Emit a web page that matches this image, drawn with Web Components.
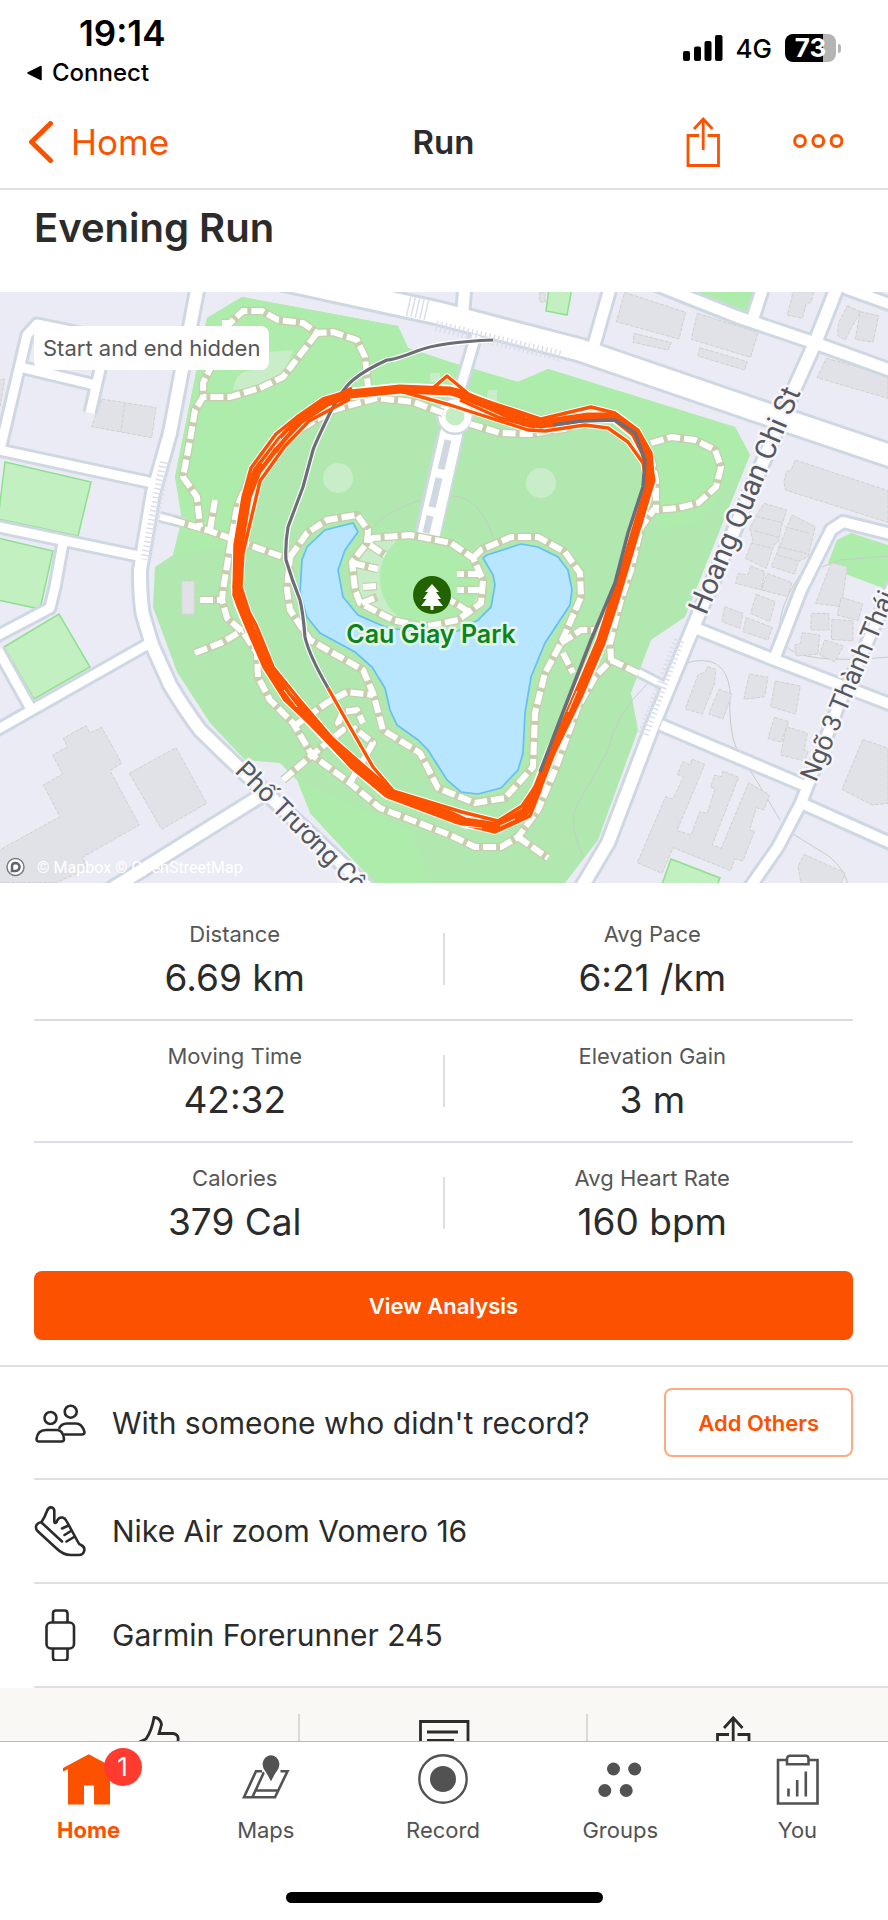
<!DOCTYPE html>
<html lang="en">
<head>
<meta charset="utf-8">
<meta name="viewport" content="width=device-width, initial-scale=1">
<title>Evening Run</title>
<style>
    :root {
        --orange: #fc5200;
        --ink: #2b2b2b;
        --muted: #565656;
        --line: #e0e0e0;
    }
    body {
        margin: 0;
        height: 100vh;
        display: flex;
        flex-direction: column;
        background: #fff;
        color: var(--ink);
        font-family: Inter, "Liberation Sans", sans-serif;
    }
    main {
        flex: 1;
        min-height: 0;
        overflow-y: auto;
        scrollbar-width: none;
    }
</style>
</head>
<body>
    <status-bar time="19:14" app="Connect" network="4G" battery="73"></status-bar>
    <nav-bar back="Home">Run</nav-bar>
    <main>
        <activity-title>Evening Run</activity-title>
        <route-map>Start and end hidden</route-map>
        <stat-list>
            <stat-row>
                <stat-item label="Distance">6.69 km</stat-item>
                <stat-item label="Avg Pace">6:21 /km</stat-item>
            </stat-row>
            <stat-row>
                <stat-item label="Moving Time">42:32</stat-item>
                <stat-item label="Elevation Gain">3 m</stat-item>
            </stat-row>
            <stat-row last>
                <stat-item label="Calories">379 Cal</stat-item>
                <stat-item label="Avg Heart Rate">160 bpm</stat-item>
            </stat-row>
            <app-button slot="action">View Analysis</app-button>
        </stat-list>
        <detail-row icon="people" tall>With someone who didn't record?
            <app-button slot="action" outline>Add Others</app-button>
        </detail-row>
        <detail-row icon="shoe">Nike Air zoom Vomero 16</detail-row>
        <detail-row icon="watch">Garmin Forerunner 245</detail-row>
        <social-bar></social-bar>
    </main>
    <tab-bar>
        <tab-item icon="home" badge="1" active>Home</tab-item>
        <tab-item icon="maps">Maps</tab-item>
        <tab-item icon="record">Record</tab-item>
        <tab-item icon="groups">Groups</tab-item>
        <tab-item icon="you">You</tab-item>
    </tab-bar>

<script>
    // All icons share a 52x52 box
    const icons = {
        people: `<g fill="none" stroke="currentColor" stroke-width="2.6" stroke-linejoin="round">
            <circle cx="16.5" cy="21" r="6"/><circle cx="36.7" cy="14.7" r="6"/>
            <path d="M12 33h11q6 0 7 9q0 2.500-2.500 2.500H5q-2.500 0-2.500-2.500Q3.500 33 12 33z"/>
            <path d="M25 32q2-5.500 8-5.500h9q6 0 8.500 8.500q0 2.500-2.500 2.500H30"/></g>`,
        shoe: `<g fill="none" stroke="currentColor" stroke-width="2.6" stroke-linejoin="round" stroke-linecap="round">
            <path d="M7.500 17Q11 12 13 6q1.500-4.500 5-3.500q2.700 1 2.300 5v9q.3 2.500 2.200.8Q24 12 28.500 12.500q2.500.5 4 3.500L44 37q1 2.500 3 3q4.500 2 3 6.500q-1 3.500-5 3.500h-8Q29 50 22 43L3.500 26Q1 23 2.500 20Q4 17.500 7.500 17z"/>
            <path d="M7.500 17.500L28 36.500M28 23.500l6.500-3M30.500 30l6.500-4M32.500 36.500L40 32"/></g>`,
        watch: `<g fill="none" stroke="currentColor" stroke-width="2.6">
            <rect x="12.500" y="13.500" width="27.500" height="26" rx="4.500"/>
            <path d="M19 13.500V4.500q0-3 3-3h8.500q3 0 3 3v9M19 39.500v9q0 3 3 3h8.500q3 0 3-3v-9"/></g>`,
        home: `<path fill="currentColor" d="M25.700.3L51.500 14v3.500L47 15.500v35H31V31.500H21v19H5V15.200L0 17.500V14z"/>`,
        maps: `<g fill="none" stroke="currentColor" stroke-width="2.600">
            <path d="M22 17.200h-6L4 43.200h31L47.500 17.200h-7M24 18L12.500 43M16.500 36.500H38"/>
            <path fill="currentColor" stroke="#fff" stroke-width="1.500" d="M31 29.500Q28 22 23.500 16Q19.500 8 25 3q6-5 12 0q5.500 5 1.500 13Q34 22 31 29.500z"/></g>`,
        record: `<circle cx="26" cy="25" r="23.700" fill="none" stroke="currentColor" stroke-width="2.400"/><circle cx="26" cy="25" r="13" fill="currentColor"/>`,
        groups: `<g fill="currentColor"><circle cx="19.500" cy="15" r="6.500"/><circle cx="40.700" cy="15" r="6.500"/><circle cx="10.800" cy="36.500" r="6.500"/><circle cx="32.200" cy="36.500" r="6.500"/></g>`,
        you: `<g fill="none" stroke="currentColor" stroke-width="2.600">
            <path d="M15 6H7v43.500h39.500V6H38M17.500 42.500v-8M26.200 42.500V26M34.800 42.500V17.500"/>
            <path d="M16 10.200V5q0-3.200 3-3.200h16q2.500 0 2.500 3.200v5.200z"/></g>`,
        kudos: `<path fill="none" stroke="currentColor" stroke-width="2.800" d="M4 31l13-6q6-9 8-21.500q6 0 7.500 7l-2.500 9H44q6 1 5 7l-4 21H20L4 48z"/>`,
        comment: `<g fill="none" stroke="currentColor" stroke-width="2.800"><path d="M2.500 7.500h47.500v34H26l-10 9v-9H2.500z"/><path d="M9 18h31M9 26.500h27M9 35h22"/></g>`,
        share: `<g fill="none" stroke="currentColor" stroke-width="2.800"><path d="M22 20.500H10.500V51h31.500V20.500H30.500M26.200 3.500V36M17 14l9.200-10.200L35.500 14"/></g>`
    };

    const icon = name => `<svg viewBox="0 0 52 52" width="52" height="52" aria-hidden="true">${icons[name]}</svg>`;

    const define = (name, render) => customElements.define(name, class extends HTMLElement {
        connectedCallback() {
            if (this.shadowRoot) return;
            this.attachShadow({ mode: 'open' });
            this.shadowRoot.innerHTML = render(this);
        }
    });

    define('status-bar', el => `
        <style>
            :host {
                display: flex;
                justify-content: space-between;
                height: 96px;
                padding: 0 47px 0 27px;
                color: #000;
            }
            .left { display: flex; flex-direction: column; padding-top: 13px; }
            .time { padding-left: 52px; font-size: 35px; font-weight: 600; line-height: 40px; }
            a {
                display: flex;
                align-items: center;
                gap: 9px;
                font-size: 24px;
                font-weight: 500;
                line-height: 40px;
                color: inherit;
                text-decoration: none;
            }
            .right { display: flex; align-items: center; gap: 13px; font-size: 26px; font-weight: 500; }
            .battery { display: flex; align-items: center; gap: 2px; }
            .level {
                width: 51px;
                border-radius: 8px;
                background: linear-gradient(90deg, #000 75%, #b4b4b4 75%);
                color: #fff;
                font-weight: 700;
                line-height: 28px;
                text-align: center;
            }
            .nub { width: 3px; height: 9px; border-radius: 0 4px 4px 0; background: #b4b4b4; }
        </style>
        <div class="left">
            <span class="time">${el.getAttribute('time')}</span>
            <a href="#"><svg width="16" height="16" viewBox="0 0 16 16" aria-hidden="true"><path d="M1 8L14 1.500V14.500z" stroke="#000" stroke-width="1.500" stroke-linejoin="round"/></svg>${el.getAttribute('app')}</a>
        </div>
        <div class="right">
            <svg width="40" height="26" viewBox="0 0 40 26" aria-hidden="true"><rect y="16" width="7" height="10" rx="2"/><rect x="11" y="11.500" width="7" height="14.500" rx="2"/><rect x="21.500" y="6" width="7" height="20" rx="2"/><rect x="32" width="7.500" height="26" rx="2"/></svg>
            <span>${el.getAttribute('network')}</span>
            <span class="battery"><span class="level">${el.getAttribute('battery')}</span><span class="nub"></span></span>
        </div>`);

    define('nav-bar', el => `
        <style>
            :host {
                display: grid;
                grid-template-columns: 1fr auto 1fr;
                align-items: center;
                height: 92px;
                padding: 0 45px 0 28px;
                border-bottom: 2px solid var(--line);
            }
            a { display: flex; align-items: center; gap: 17px; color: var(--orange); font-size: 35px; line-height: 44px; text-decoration: none; }
            h1 { margin: 0 0 0 16px; font-size: 33px; font-weight: 600; line-height: 44px; }
            .actions { display: flex; justify-content: flex-end; align-items: center; gap: 73px; }
            button { display: flex; padding: 0; border: 0; background: none; color: var(--orange); }
        </style>
        <a href="#"><svg width="26" height="42" viewBox="0 0 26 42" fill="none" stroke="currentColor" stroke-width="5" stroke-linecap="round" stroke-linejoin="round" aria-hidden="true"><path d="M22.500 2.500L3.500 21L22.500 39.500"/></svg>${el.getAttribute('back')}</a>
        <h1><slot></slot></h1>
        <div class="actions">
            <button aria-label="Share"><svg width="34" height="50" viewBox="0 0 34 50" fill="none" stroke="currentColor" stroke-width="2.800"><path d="M13 18.500H2V48.500h30.500V18.500H21.500M17.200 2V33M8 12l9.200-10L26.500 12"/></svg></button>
            <button aria-label="More"><svg width="50" height="16" viewBox="0 0 50 16" fill="none" stroke="currentColor" stroke-width="3"><circle cx="7" cy="7" r="5.400"/><circle cx="25.300" cy="7" r="5.400"/><circle cx="43.500" cy="7" r="5.400"/></svg></button>
        </div>`);

    define('activity-title', () => `
        <style>
            :host { display: block; padding: 14px 34px 40px; }
            h2 { margin: 0; font-size: 40px; font-weight: 600; line-height: 48px; }
        </style>
        <h2><slot></slot></h2>`);

    define('route-map', () => {
        const roads = `
            <path d="M198 285L170 433L153 493L140 570Q140 600 143 615L152 645L170 685Q185 710 200 730L233 762L370 890" stroke-width="12"/>
            <path d="M0 450L27 335L37 324L100 337M20 367L95 385M101 365L90 413" stroke-width="9"/>
            <path d="M-5 449L153 483M-5 526L143 557M63 543L55 587L50 608L-5 637M150 643L-5 731M-2 650L31 709" stroke-width="9"/>
            <path d="M262 795L110 890" stroke-width="12"/>
            <path d="M250 272L438 313L580 350L755 410L900 459" stroke-width="21"/>
            <path d="M838 285L815 343L788 403L695 623L651 730L608 843L580 890" stroke-width="12"/>
            <path d="M645 280L690 298L738 317L815 343L895 372M762 290L753 318M611 285L594 345M465 285L463 310" stroke-width="11"/>
            <path d="M845 288L895 306M895 535L843 522L831 530L801 590L775 657" stroke-width="10"/>
            <path d="M695 628L775 660L895 706M661 725L803 785M801 803L895 845M893 585L838 707L801 803L778 847L748 890" stroke-width="10"/>
            <path d="M476 335L457 400M451 433L428 537" stroke-width="9"/>
            <path d="M638 672L665 686M160 517L185 523" stroke-width="6"/>`;
        const trails = `
            <path d="M222 323L230 323L243 311L262 311L278 320L303 323L317 333L333 332L357 340L365 357L368 387"/>
            <path d="M317 333L283 377L260 388L230 397L203 397"/>
            <path d="M213 363L203 383L203 397L195 410L190 440L183 477L197 497L200 527"/>
            <path d="M172 520L207 530L283 557M215 500L210 530"/>
            <path d="M443 413L413 402L377 398L333 410L287 437L253 470L237 507L230 547L223 590L222 600L227 618L243 632L257 653L258 677L270 700L293 723L312 755L350 783L380 808L450 835L475 847L501 847L518 837L538 810L555 770L578 707L595 677L611 660L610 643L620 603L631 570L641 527L656 507L656 480L651 457"/>
            <path d="M470 424L500 433L530 434L570 428M651 443L671 437L695 440L715 450L721 467L716 487L698 503L678 508L656 510"/>
            <path d="M518 837L548 858M200 600L222 600M195 653L223 642L243 630"/>
            <path d="M290 557L307 533L327 520L357 515L368 530L367 543L352 562L355 590L360 603L393 620L423 627L458 620L481 603L483 580L473 558L451 543L410 535L373 538L367 543"/>
            <path d="M473 558L481 550L511 537L538 537L565 552L580 573L581 597L561 643L545 673L535 713L533 767L505 798L475 803L438 788L420 753L383 730L373 693L363 670L310 640L290 610L287 590L290 557"/>
            <path d="M283 780L312 755L343 730L338 723L343 712L357 710L363 723M293 727L328 702L347 692L373 695M350 783L373 743L353 727"/>
            <path d="M561 643L581 630L595 630M563 653L573 673M611 660L638 673M370 545L385 555M352 563L378 569M363 587L377 586M362 603L377 597M481 574L457 574M481 590L457 590M469 612L450 600"/>`;
        // One closed lap, plus the spread of the other laps around it
        const lap = 'M450 391L400 389L350 394L327 402L300 420L281 440L257 471L247 497L240 540L237 587L240 603L250 627L268 667L287 695L317 727L350 761L387 793L450 815L465 822L498 827L525 812L538 787L551 753L578 697L601 643L615 600L638 523L651 480L645 453L635 433L615 417L588 417L541 424L525 422L488 405L458 393z';
        const spread = `
            <path d="M400 388L433 388L447 376L471 396L541 419L591 407L615 413L638 430L651 453L653 477L640 527"/>
            <path d="M340 395L400 391L450 405L528 430L545 431L585 425L608 428L628 442L643 463L648 490"/>
            <path d="M350 391L323 399L297 417L276 434L251 468L243 497L235 545L234 595L246 625L264 667L285 700L320 733L352 768L388 797L455 822L495 832L530 816L541 788"/>
            <path d="M350 399L309 421L285 446L260 481L252 515L243 553L241 587L249 612L256 625L273 667L298 698L332 738L365 767L393 791L462 812L498 821L522 806L535 787L598 640L614 590"/>
            <path d="M352 388L330 399M276 452L290 433M460 400L500 418L535 427M470 395L505 411L540 419"/>
            <path d="M328 688L350 727L373 767L397 795"/>`;
        const hidden = 'M493 340Q440 342 417 351T387 360Q365 370 353 380T328 417T313 450L303 487L288 527Q285 545 286 560Q292 580 300 600Q303 612 305 637Q309 655 328 688';
        return `
        <style>
            :host { display: block; position: relative; }
            .map { display: block; width: 100%; }
            .chip {
                position: absolute;
                left: 34px;
                top: 34px;
                padding: 0 9px;
                border-radius: 8px;
                background: #fff;
                color: var(--muted);
                font-size: 22px;
                line-height: 44px;
            }
            .halo { paint-order: stroke; stroke: #fff; stroke-width: 5px; stroke-linejoin: round; }
            .street { font-family: Roboto, sans-serif; font-size: 26px; fill: #55575f; stroke: #f6f6fa; }
            .street.wide { font-size: 29px; }
            .park { font-size: 25px; font-weight: 600; fill: #0b8420; text-anchor: middle; stroke: #e4f6e8; }
            .credit { font-family: Roboto, sans-serif; font-size: 16px; fill: #fff; }
            .buildings { fill: #e1e2e7; stroke: #d3cfcb; stroke-width: 3; stroke-dasharray: 12 4; }
        </style>
        <svg class="map" viewBox="0 292 888 591" role="img" aria-label="Route map">
            <rect y="292" width="888" height="591" fill="#ebebf5"/>
            <path fill="#b0e8af" d="M242 297L398 326L408 348L450 362L518 382L548 369L735 427L750 455L685 617L651 640L631 693L638 730L598 840L565 883L375 883L310 813L310 792L297 780L280 763L245 760L210 723L177 672L153 607L155 567L173 555L182 520L179 490L175 477L207 318z"/>
            <path fill="#adecab" d="M242 297L398 326L408 348L450 362L518 382L548 369L735 427L750 455L700 520L660 530L640 440L560 410L360 385L280 440L240 545L173 555L182 520L175 477L207 318zM297 780L410 830L430 883L375 883L310 813z"/>
            <g fill="#c9edc8">
                <circle cx="338" cy="478" r="15"/><circle cx="541" cy="483" r="15"/>
                <path d="M233 390Q235 370 255 370L265 352L293 350L283 377L260 388zM430 373h10v9h-10zM488 390h9v11h-11z"/>
                <path d="M368 543L410 537L452 545L474 560L483 580L480 603L458 619L423 626L393 619L360 603L353 575z"/>
            </g>
            <circle cx="430" cy="578" r="50" fill="#adecab"/>
            <g fill="#c2f0c0" stroke="#8ee08f" stroke-width="1.500">
                <path d="M5 462L91 482L78 536L-2 519zM-2 538L53 551L40 609L-2 600zM4 647L59 614L90 667L34 699zM549 288L572 288L567 315L546 311zM671 859L720 878L715 890L660 890z"/>
            </g>
            <path fill="#adecab" d="M691 290H754L747 312zM837 540L851 533L888 545V590L848 575L828 563z"/>
            <g fill="none" stroke="#c2cfc8" stroke-width="1">
                <path d="M372 528Q385 512 420 500M450 496Q480 495 494 540M648 683Q615 715 608 750Q595 775 580 800Q565 820 584 857M686 663Q725 652 730 690Q728 730 737 750L758 783L780 820M790 832L830 857Q845 870 848 885M800 575Q770 620 785 645Q800 665 890 657M822 567L840 560L888 556"/>
            </g>

            <!-- park side and south-west blocks -->
            <g class="buildings" transform="translate(0 280) scale(.3333)">
                <path d="M305 357L468 383L455 473L275 440zM375 370L362 455M-10 298H14L0 380zM545 903H583V1003H545z"/>
            </g>
            <g class="buildings" transform="translate(0 580) scale(.3333)">
                <path d="M-10 815L180 710L130 615L188 582L158 525L203 500L190 475L258 437L270 460L305 442L365 550L330 572L418 735L247 832L262 865L170 908H-10zM388 580L528 503L620 670L485 748z"/>
            </g>
            <!-- north-east blocks -->
            <g class="buildings" transform="translate(438 280) scale(.3333)">
                <path d="M560 37L743 97L723 177L535 125zM588 160L700 188L690 210L585 187zM778 100L960 157L938 232L760 178zM785 203L928 245L920 270L780 228zM1065 35H1128L1118 68L1105 70L1093 115L1048 105L1060 60zM1228 77L1268 95L1240 143L1222 180L1198 165L1202 130zM1267 95L1322 107L1305 187L1252 178zM1165 235L1350 285V355L1137 293zM1072 540L1350 632V727L1042 630L1038 605L1045 575L1060 570zM305 38h16v28h-16z"/>
                <path d="M978 670L1046 690L1030 740L1022 785L1008 795L985 865L922 835L945 780L935 745L955 708zM1062 705L1132 740L1110 830L1080 845L1070 882L1000 860L1025 800zM955 710L1035 728M950 752L1022 772M940 790L1005 805M1040 740L1115 760M1020 800L1105 820M1020 825L1085 845M938 858L980 875L970 930L893 910L900 880L930 885zM988 880L1062 908L1050 950L970 930zM1180 848L1228 860L1210 980L1133 970z"/>
            </g>
            <!-- south-east blocks -->
            <g class="buildings" transform="translate(438 580) scale(.3333)">
                <path d="M860 80L915 100L905 145L852 125zM955 43L1012 65L995 125L938 100zM925 113L1003 142L990 180L915 155zM1210 52L1275 72L1260 122L1198 105zM1120 100H1173V150H1118zM1182 118L1245 122V183L1180 178zM1092 158L1145 165L1140 222L1075 228L1070 195L1088 190zM1160 180L1217 198L1190 245L1145 225z"/>
                <path d="M808 260L833 268L830 310L793 402L742 387L780 285L803 275zM843 328L882 342L855 417L812 402zM935 282L990 292L980 350L918 358L925 320zM1012 303L1087 318L1073 402L998 380zM1010 412L1052 425L1030 487L990 475zM1045 440L1108 460L1098 510L1110 515L1100 543L1028 525zM1275 478L1350 505V670L1302 675L1212 628z"/>
                <path d="M762 538L800 553L717 752L760 765L785 695L808 700L832 625L818 622L830 585L850 590L855 573L902 592L822 795L850 805L932 608L995 645L978 690L955 683L935 750L950 753L915 842L890 837L878 872L705 803L672 880L598 848L683 650L705 657L737 590L718 583L735 545L757 555zM1098 823L1220 878L1210 915H1090L1080 860z"/>
            </g>

            <g fill="none" stroke="#cfd7e3" stroke-linejoin="round">${roads.replace(/stroke-width="(\d+)"/g, (m, w) => `stroke-width="${+w + 6}"`)}</g>
            <path d="M451 433L427 537" stroke="#cfd7e3" stroke-width="27"/>
            <g fill="none" stroke="#fff" stroke-linejoin="round">${roads}</g>
            <path d="M452 430L428 537" stroke="#fff" stroke-width="22"/>
            <path d="M448 440L426 533" stroke="#cfd7e3" stroke-width="7" stroke-dasharray="30 9"/>
            <circle cx="455" cy="416" r="13" fill="#c5edc4" stroke="#cfd7e3" stroke-width="12"/>
            <circle cx="455" cy="416" r="13" fill="#c5edc4" stroke="#fff" stroke-width="7"/>
            <g fill="none" stroke="#d9dee9" stroke-width="11" stroke-dasharray="1.500 3">
                <path d="M165 462L146 560M679 640L643 735M436 326L560 356"/>
                <path d="M408 306L430 311" stroke-width="20"/>
            </g>

            <path fill="#b8e5ff" stroke="#63c0f5" stroke-width="1.700" d="M353 523L358 532L345 550L338 570L343 597L358 615L385 627L432 635L458 631L478 620L491 607L495 585L493 575L483 558L487 555L521 544L538 547L558 557L568 570L572 590L570 605L545 643L531 677L525 713L523 753L518 770L501 788L478 794L461 792L447 780L428 750L418 740L397 725L390 710L385 688L372 667L355 652L320 633L307 617L300 593L302 560L307 547L325 530z"/>
            <g fill="none" stroke="#c5cfad" stroke-width="8.500" stroke-linejoin="round">${trails}</g>
            <g fill="none" stroke="#fff" stroke-width="6" stroke-linejoin="round" stroke-dasharray="13 4">${trails}</g>

            <g fill="none" stroke-linejoin="round">
                <path d="${lap}" stroke="#fff" stroke-width="12.500"/>
                <g stroke="#fff" stroke-width="5.500">${spread}</g>
                <path d="${hidden}" stroke="#fff" stroke-width="5.500"/>
                <path d="${hidden}" stroke="#6d6d78" stroke-width="3.200"/>
                <path d="${lap}" stroke="#fc5200" stroke-width="9"/>
                <g stroke="#fc5200" stroke-width="3.400">${spread}</g>
                <path d="M262 464L281 438M275 447L289 431M284 690L297 707M462 826L482 828M500 826L515 819M577 691L568 712" stroke="#fff" stroke-width="1"/>
                <path d="M553 425L581 421L615 420L635 433L645 460L643 487L628 533L615 583L591 640L565 707L540 772" stroke="#6d6d78" stroke-width="3.500"/>
            </g>

            <circle cx="432" cy="595" r="19" fill="#226300"/>
            <path fill="#fff" d="M432 584L439 592H436L441 599H437.500L443 606H433.500V610H430.500V606H421L426.500 599H423L428 592H425z"/>
            <text class="halo park" x="431" y="643">Cau Giay Park</text>
            <text class="halo street wide" transform="translate(706 616) rotate(-67)">Hoang Quan Chi St</text>
            <text class="halo street" transform="translate(816 783) rotate(-67)">Ngõ 3 Thành Thái</text>
            <text class="halo street" transform="translate(234 772) rotate(45)">Phố Trương Cô</text>
            <circle cx="15.500" cy="867" r="8.500" fill="#fff" stroke="#7a7c85" stroke-width="1.500"/>
            <path fill="none" stroke="#62646d" stroke-width="2.500" d="M12 871V866Q12 863 15.500 863Q19.500 863.500 19.500 867T15.500 871z"/>
            <text class="credit" x="37" y="873">© Mapbox © OpenStreetMap</text>
        </svg>
        <span class="chip"><slot></slot></span>`;
    });

    define('stat-list', () => `
        <style>
            :host { display: block; padding: 16px 35px 25px 34px; border-bottom: 2px solid var(--line); }
            .action { margin-top: 8px; }
        </style>
        <slot></slot>
        <div class="action"><slot name="action"></slot></div>`);

    define('stat-row', () => `
        <style>
            :host {
                display: grid;
                grid-template-columns: 1fr 1fr;
                column-gap: 16px;
                height: 120px;
                border-bottom: 2px solid #dcdce4;
                background: linear-gradient(#dfdfdf, #dfdfdf) center / 2px 52px no-repeat;
            }
            :host([last]) { border-bottom: 0; }
        </style>
        <slot></slot>`);

    define('stat-item', el => `
        <style>
            :host { display: flex; flex-direction: column; align-items: center; gap: 8px; padding-top: 21px; }
            .label { color: var(--muted); font-size: 22px; line-height: 28px; }
            .value { font-size: 37px; line-height: 44px; }
        </style>
        <span class="label">${el.getAttribute('label')}</span>
        <span class="value"><slot></slot></span>`);

    define('app-button', () => `
        <style>
            :host { display: block; }
            button {
                width: 100%;
                height: 69px;
                padding: 0 32px;
                border: 0;
                border-radius: 8px;
                background: var(--orange);
                color: #fff;
                font: 600 22px Inter, "Liberation Sans", sans-serif;
            }
            :host([outline]) button { border: 2px solid #ffa982; background: #fff; color: var(--orange); }
        </style>
        <button><slot></slot></button>`);

    define('detail-row', el => `
        <style>
            :host {
                display: flex;
                align-items: center;
                gap: 26px;
                height: 102px;
                margin-left: 34px;
                padding-right: 35px;
                border-bottom: 2px solid var(--line);
                font-size: 30px;
            }
            :host([tall]) { height: 111px; }
            svg { flex: none; }
            .text { flex: 1; }
        </style>
        ${icon(el.getAttribute('icon'))}
        <span class="text"><slot></slot></span>
        <slot name="action"></slot>`);

    define('social-bar', () => `
        <style>
            :host {
                display: grid;
                grid-template-columns: repeat(3, 1fr);
                height: 104px;
                padding: 0 11px;
                background: #f9f8f4;
            }
            button {
                display: flex;
                justify-content: center;
                align-items: center;
                padding: 0;
                border: 0;
                color: var(--ink);
                background: linear-gradient(#d9d9d6, #d9d9d6) right / 2px 52px no-repeat;
            }
            button:last-child { background: none; }
        </style>
        <button aria-label="Give kudos">${icon('kudos')}</button>
        <button aria-label="Comment">${icon('comment')}</button>
        <button aria-label="Share">${icon('share')}</button>`);

    define('tab-bar', () => `
        <style>
            :host { display: block; border-top: 1px solid #b9b9b9; background: #fff; }
            nav { display: grid; grid-template-columns: repeat(5, 1fr); padding: 12px 2px 0 0; }
            .indicator { width: 317px; height: 11px; margin: 47px auto 17px; border-radius: 6px; background: #000; }
        </style>
        <nav><slot></slot></nav>
        <div class="indicator"></div>`);

    define('tab-item', el => `
        <style>
            :host { display: block; color: #525252; }
            :host([active]) { color: var(--orange); font-weight: 700; }
            a {
                display: flex;
                flex-direction: column;
                align-items: center;
                gap: 10px;
                padding-bottom: 1px;
                color: inherit;
                font-size: 22px;
                line-height: 28px;
                text-decoration: none;
            }
            .icon { display: flex; position: relative; }
            .badge {
                position: absolute;
                left: 41px;
                top: -6px;
                width: 38px;
                border-radius: 50%;
                background: #ff3b30;
                color: #fff;
                font-size: 26px;
                font-weight: 400;
                line-height: 38px;
                text-align: center;
            }
        </style>
        <a href="#">
            <span class="icon">${icon(el.getAttribute('icon'))}${el.hasAttribute('badge') ? `<span class="badge">${el.getAttribute('badge')}</span>` : ''}</span>
            <slot></slot>
        </a>`);
</script>
</body>
</html>
